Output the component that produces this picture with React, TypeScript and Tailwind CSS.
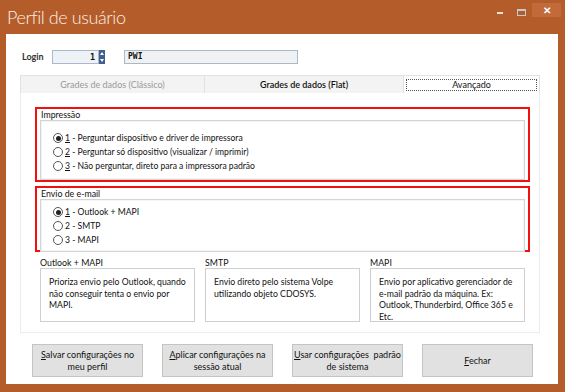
import React from 'react';

const font = { fontFamily: 'Lato, "Open Sans", sans-serif' };

function Radio({ checked, children }: { checked?: boolean; children: React.ReactNode }) {
  return (
    <div className="flex items-center h-[14px] text-[8.6px] leading-[12px] text-[#111]">
      <span className="w-[10px] h-[10px] rounded-full border border-[#555] bg-white flex items-center justify-center ml-[12px] mr-[2px]">
        {checked && <span className="w-[5px] h-[5px] rounded-full bg-[#222]" />}
      </span>
      <span>{children}</span>
    </div>
  );
}

function OptionGroup({ title, children, h }: { title: string; children: React.ReactNode; h: string }) {
  return (
    <div className={`border-2 border-[#f01010] ml-[14px] w-[495px] px-[3px] pt-[1px] ${h}`}>
      <div className="text-[8.8px] leading-[10px] pl-[1px] text-[#111]">{title}</div>
      <div className="border border-[#d4d4d4] shadow-[inset_0_0_0_1px_#f4f4f4]">{children}</div>
    </div>
  );
}

function InfoBox({ title, lines }: { title: string; lines: string[] }) {
  return (
    <div className="w-[155px]">
      <div className="text-[8.8px] leading-[10px] h-[10px] text-[#111]">{title}</div>
      <div className="h-[54px] border border-[#cfcfcf] px-[8px] pt-[7px] text-[8.7px] leading-[11.5px] text-[#111] whitespace-nowrap">
        {lines.map((l) => (
          <div key={l}>{l}</div>
        ))}
      </div>
    </div>
  );
}

function Btn({ first, rest, line2 }: { first: string; rest: string; line2?: string }) {
  return (
    <div className="w-[111px] h-[33px] bg-[#e1e1e1] border border-[#c4c4c4] flex flex-col items-center justify-center text-[9px] leading-[12px] text-[#111] whitespace-pre">
      <div>
        <span className="underline">{first}</span>
        {rest}
      </div>
      {line2 && <div>{line2}</div>}
    </div>
  );
}

export default function App() {
  return (
    <div className="w-[565px] h-[392px] bg-[#b45d2a] flex flex-col overflow-hidden" style={font}>
      <div className="h-[34px] flex items-start">
        <div className="pl-[7px] pt-[5px] text-[18px] leading-[24px] font-light tracking-[-0.4px] text-[#fbefe6]">
          Perfil de usuário
        </div>
        <div className="ml-auto flex items-start">
          <span className="mt-[12px] w-[6px] h-[2px] bg-[#f4e2d6] mr-[14px]" />
          <span className="mt-[9px] w-[9px] h-[7px] border border-[#c9c9c9] border-t-[2px] mr-[6px]" />
          <span className="mt-[3px] w-[29px] h-[14px] bg-[#c26a39] flex items-center justify-center text-white text-[10px] font-bold leading-none mr-[4px]">
            ✕
          </span>
        </div>
      </div>

      <div className="ml-[6px] w-[552px] h-[350px] bg-white text-[#111]">
        <div className="flex items-center pt-[16px] pl-[16px] h-[30px]">
          <span className="text-[9px] font-bold text-[#333] w-[30px]">Login</span>
          <div
            className="w-[47px] h-[14px] border border-[#a9b8cc] bg-[#eef1f5] text-right pr-[3px] text-[8.5px] leading-[12px] font-bold"
            style={{ fontFamily: '"DejaVu Sans Mono", monospace' }}
          >
            1
          </div>
          <div className="w-[6px] h-[14px] bg-[#3f5f8c] flex flex-col items-center justify-between py-[2px]">
            <span className="w-0 h-0 border-l-[2px] border-r-[2px] border-b-[3px] border-l-transparent border-r-transparent border-b-white" />
            <span className="w-0 h-0 border-l-[2px] border-r-[2px] border-t-[3px] border-l-transparent border-r-transparent border-t-white" />
          </div>
          <div
            className="ml-[19px] w-[174px] h-[14px] border border-[#a9b8cc] bg-[#f0f1f3] pl-[3px] text-[8px] leading-[12px] font-bold"
            style={{ fontFamily: '"DejaVu Sans Mono", monospace' }}
          >
            PWI
          </div>
        </div>

        <div className="ml-[14px] w-[520px] mt-[11px]">
          <div className="flex h-[18px] text-[9px]">
            <div className="w-[185px] border border-[#e2e2e2] border-b-0 bg-[#f3f3f3] flex items-center justify-center text-[#9a9a9a]">
              Grades de dados (Clássico)
            </div>
            <div className="w-[199px] border-t border-r border-[#e2e2e2] bg-[#f3f3f3] flex items-center justify-center text-[#111] font-semibold">
              Grades de dados (Flat)
            </div>
            <div className="flex-1 bg-white border-t border-r border-[#e2e2e2] px-[2px] pt-[3px] pb-[2px]">
              <div className="h-full border border-dotted border-[#555] flex items-center justify-center">Avançado</div>
            </div>
          </div>
          <div className="h-[240px] border border-t-0 border-[#ececec] pt-[14px] flex flex-col">
            <OptionGroup title="Impressão" h="h-[75px]">
              <div className="h-[58px] pt-[10px]">
                <Radio checked>
                  <span className="underline">1</span> - Perguntar dispositivo e driver de impressora
                </Radio>
                <Radio>
                  <span className="underline">2</span> - Perguntar só dispositivo (visualizar / imprimir)
                </Radio>
                <Radio>
                  <span className="underline">3</span> - Não perguntar, direto para a impressora padrão
                </Radio>
              </div>
            </OptionGroup>
            <div className="h-[4px]" />
            <OptionGroup title="Envio de e-mail" h="h-[66px]">
              <div className="h-[51px] pt-[5px]">
                <Radio checked>
                  <span className="underline">1</span> - Outlook + MAPI
                </Radio>
                <Radio>2 - SMTP</Radio>
                <Radio>3 - MAPI</Radio>
              </div>
            </OptionGroup>
            <div className="flex gap-[10px] ml-[19px] mt-[6px]">
              <InfoBox title="Outlook + MAPI" lines={['Prioriza envio pelo Outlook, quando', 'não conseguir tenta o envio por', 'MAPI.']} />
              <InfoBox title="SMTP" lines={['Envio direto pelo sistema Volpe', 'utilizando objeto CDOSYS.']} />
              <InfoBox
                title="MAPI"
                lines={['Envio por aplicativo gerenciador de', 'e-mail padrão da máquina. Ex:', 'Outlook, Thunderbird, Office 365 e', 'Etc.']}
              />
            </div>
          </div>
        </div>

        <div className="flex ml-[26px] mt-[11px] gap-[19px]">
          <Btn first="S" rest="alvar configurações no" line2="meu perfil" />
          <Btn first="A" rest="plicar configurações na" line2="sessão atual" />
          <Btn first="U" rest="sar configurações  padrão" line2="de sistema" />
          <Btn first="F" rest="echar" />
        </div>
      </div>
    </div>
  );
}
